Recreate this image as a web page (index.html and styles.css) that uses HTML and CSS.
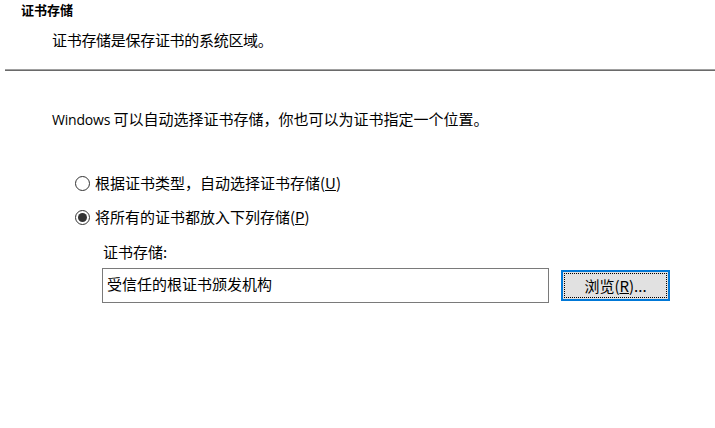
FILE: index.html
```html
<!DOCTYPE html>
<html lang="zh-CN">
<head>
<meta charset="utf-8">
<title>证书存储</title>
<link rel="stylesheet" href="styles.css">
</head>
<body>
<div class="page">
  <header class="head">
    <div class="title">证书存储</div>
    <div class="desc">证书存储是保存证书的系统区域。</div>
  </header>
  <div class="sep"></div>
  <main class="content">
    <p class="intro"><span class="latin">Windows</span> 可以自动选择证书存储，你也可以为证书指定一个位置。</p>
    <div class="options">
      <div class="radio-row">
        <span class="radio"></span>
        <span class="radio-text">根据证书类型，自动选择证书存储(<u>U</u>)</span>
      </div>
      <div class="radio-row second">
        <span class="radio checked"></span>
        <span class="radio-text">将所有的证书都放入下列存储(<u>P</u>)</span>
      </div>
    </div>
    <div class="store">
      <div class="store-label">证书存储:</div>
      <div class="store-row">
        <div class="store-input">受信任的根证书颁发机构</div>
        <div class="browse"><span class="browse-inner">浏览(<u>R</u>)...</span></div>
      </div>
    </div>
  </main>
</div>
</body>
</html>
```

FILE: styles.css
```css
html, body {
  margin: 0;
  padding: 0;
  background: #ffffff;
}

body {
  width: 715px;
  height: 428px;
  overflow: hidden;
  font-family: "Noto Sans CJK SC", "Noto Sans", sans-serif;
  font-size: 15px;
  line-height: 20px;
  color: #000000;
}

.head {
  display: flex;
  flex-direction: column;
}

.title {
  padding-left: 21px;
  font-size: 13px;
  font-weight: bold;
  line-height: 20px;
}

.desc {
  margin-top: 10px;
  padding-left: 52px;
  line-height: 20px;
  letter-spacing: -0.3px;
}

.sep {
  margin-top: 19px;
  margin-left: 5px;
  height: 1px;
  border-top: 1px solid #a0a0a0;
  background: #6a6a6a;
}

.content {
  display: flex;
  flex-direction: column;
}

.intro {
  margin: 38px 0 0 0;
  padding-left: 52px;
  line-height: 20px;
}

.latin {
  font-family: "Open Sans", "Noto Sans", sans-serif;
  font-size: 14px;
  letter-spacing: -0.2px;
}

.options {
  display: flex;
  flex-direction: column;
  margin-top: 43px;
  padding-left: 75px;
}

.radio-row {
  display: flex;
  align-items: center;
  height: 20px;
}

.radio-row.second {
  margin-top: 14px;
}

.radio {
  box-sizing: border-box;
  width: 15px;
  height: 15px;
  border: 1px solid #333333;
  border-radius: 50%;
  background: #ffffff;
  margin-right: 5px;
  display: flex;
  align-items: center;
  justify-content: center;
}

.radio.checked::after {
  content: "";
  width: 9px;
  height: 9px;
  border-radius: 50%;
  background: #333333;
}

.store {
  display: flex;
  flex-direction: column;
  margin-top: 15px;
  padding-left: 102px;
}

.store-label {
  line-height: 20px;
  padding-left: 1px;
}

.store-row {
  display: flex;
  align-items: flex-start;
  margin-top: 6px;
}

.store-input {
  box-sizing: border-box;
  width: 447px;
  height: 35px;
  border: 1px solid #7a7a7a;
  padding: 5px 0 0 4px;
  line-height: 20px;
  background: #ffffff;
}

.browse {
  box-sizing: border-box;
  margin-left: 12px;
  margin-top: 2px;
  width: 109px;
  height: 31px;
  border: 2px solid #0078d7;
  background: #e1e1e1;
  padding: 1px;
  display: flex;
}

.browse-inner {
  flex: 1;
  border: 1px dotted #000000;
  display: flex;
  align-items: center;
  justify-content: center;
  line-height: 20px;
}
```
